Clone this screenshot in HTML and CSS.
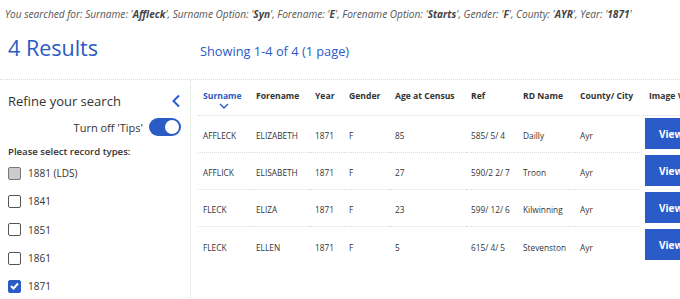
FILE: index.html
```html
<!DOCTYPE html>
<html>
<head>
<meta charset="utf-8">
<link rel="stylesheet" href="styles.css">
</head>
<body>
<p class="searched">You searched for: Surname: '<b>Affleck</b>', Surname Option: '<b>Syn</b>', Forename: '<b>E</b>', Forename Option: '<b>Starts</b>', Gender: '<b>F</b>', County: '<b>AYR</b>', Year: '<b>1871</b>'</p>
<div class="headline">
  <h1 class="count">4 Results</h1>
  <div class="showing">Showing 1-4 of 4 (1 page)</div>
</div>
<div class="layout">
  <aside class="side">
    <div class="refine">
      <span>Refine your search</span>
      <svg class="back" width="10" height="14" viewBox="0 0 10 14"><path d="M8 1.5 L2.5 7 L8 12.5" fill="none" stroke="#2b5bd0" stroke-width="2"/></svg>
    </div>
    <div class="tips">
      <span>Turn off 'Tips'</span>
      <span class="toggle"><span class="knob"></span></span>
    </div>
    <div class="select">Please select record types:</div>
    <ul class="types">
      <li><span class="cb grey"></span>1881 (LDS)</li>
      <li><span class="cb"></span>1841</li>
      <li><span class="cb"></span>1851</li>
      <li><span class="cb"></span>1861</li>
      <li><span class="cb on"><svg width="9" height="8" viewBox="0 0 9 8"><path d="M1 4 L3.5 6.5 L8 1.5" fill="none" stroke="#fff" stroke-width="2"/></svg></span>1871</li>
    </ul>
  </aside>
  <main class="results">
    <div class="thead">
      <div class="th sorted">Surname<svg class="sortarrow" width="10" height="6" viewBox="0 0 10 6"><path d="M1 1 L5 5 L9 1" fill="none" stroke="#2b5bd0" stroke-width="1.4"/></svg></div>
      <div class="th">Forename</div>
      <div class="th">Year</div>
      <div class="th">Gender</div>
      <div class="th">Age at Census</div>
      <div class="th">Ref</div>
      <div class="th">RD Name</div>
      <div class="th">County/ City</div>
      <div class="th img">Image Viewer</div>
    </div>
    <div class="row"><div class="td">AFFLECK</div><div class="td">ELIZABETH</div><div class="td">1871</div><div class="td">F</div><div class="td">85</div><div class="td">585/ 5/ 4</div><div class="td">Dailly</div><div class="td">Ayr</div><div class="btncell"><span class="view">View image</span></div></div>
    <div class="row"><div class="td">AFFLICK</div><div class="td">ELISABETH</div><div class="td">1871</div><div class="td">F</div><div class="td">27</div><div class="td">590/2 2/ 7</div><div class="td">Troon</div><div class="td">Ayr</div><div class="btncell"><span class="view">View image</span></div></div>
    <div class="row"><div class="td">FLECK</div><div class="td">ELIZA</div><div class="td">1871</div><div class="td">F</div><div class="td">23</div><div class="td">599/ 12/ 6</div><div class="td">Kilwinning</div><div class="td">Ayr</div><div class="btncell"><span class="view">View image</span></div></div>
    <div class="row last"><div class="td">FLECK</div><div class="td">ELLEN</div><div class="td">1871</div><div class="td">F</div><div class="td">5</div><div class="td">615/ 4/ 5</div><div class="td">Stevenston</div><div class="td">Ayr</div><div class="btncell"><span class="view">View image</span></div></div>
  </main>
</div>
</body>
</html>
```

FILE: styles.css
```css
html, body {
  margin: 0;
  padding: 0;
  background: #fff;
  overflow: hidden;
}
body {
  font-family: "Open Sans", "Liberation Sans", sans-serif;
  color: #333;
  width: 680px;
  height: 299px;
}
.searched {
  margin: 0;
  padding: 7px 0 0 5px;
  height: 17px;
  font-size: 10.1px;
  font-style: italic;
  color: #555;
  white-space: nowrap;
}
.searched b {
  font-weight: 700;
  color: #444;
}
.headline {
  display: flex;
  align-items: baseline;
  padding: 9px 0 0 8px;
  border-bottom: 1px dotted #ddd;
  box-sizing: border-box;
  height: 56px;
}
.count {
  margin: 0;
  font-size: 21.5px;
  font-weight: 400;
  color: #2b5bc4;
  width: 192px;
}
.showing {
  font-size: 12.8px;
  color: #2b5bc4;
}
.layout {
  display: flex;
  height: 220px;
}
.side {
  width: 191px;
  border-right: 1px dotted #cfe3cf;
  box-sizing: border-box;
  padding: 12px 9px 0 8px;
}
.refine {
  display: flex;
  justify-content: space-between;
  align-items: center;
  font-size: 13px;
  color: #333;
  height: 18px;
}
.tips {
  display: flex;
  justify-content: flex-end;
  align-items: center;
  gap: 6px;
  font-size: 11px;
  margin-top: 8px;
  height: 18px;
}
.toggle {
  width: 32px;
  height: 18px;
  border-radius: 9px;
  background: #2b5bc4;
  display: inline-flex;
  align-items: center;
  justify-content: flex-end;
  padding: 0 2px;
  box-sizing: border-box;
}
.knob {
  width: 14px;
  height: 14px;
  border-radius: 50%;
  background: #fff;
}
.select {
  font-size: 9.6px;
  font-weight: 600;
  margin-top: 9px;
}
.types {
  list-style: none;
  margin: 1px 0 0 0;
  padding: 0;
}
.types li {
  display: flex;
  align-items: center;
  height: 28.3px;
  font-size: 10px;
}
.cb {
  width: 11px;
  height: 11px;
  border: 1px solid #555;
  border-radius: 2px;
  margin-right: 7px;
  display: inline-flex;
  align-items: center;
  justify-content: center;
  box-sizing: content-box;
}
.cb.grey {
  background: #ccc;
  border-color: #777;
}
.cb.on {
  background: #2b5bc4;
  border-color: #2b5bc4;
}
.results {
  flex: 1;
  padding-left: 7px;
  overflow: hidden;
}
.thead, .row {
  display: grid;
  grid-template-columns: 53px 59px 34px 46px 76px 52px 57px 65px 140px;
}
.thead {
  height: 36px;
  border-bottom: 1px dotted #ddd;
  box-sizing: border-box;
}
.th {
  font-size: 8.6px;
  font-weight: 700;
  color: #333;
  padding: 10px 0 0 5px;
  white-space: nowrap;
  overflow: hidden;
}
.th.sorted {
  color: #2b5bc4;
  position: relative;
}
.th.img {
  padding-left: 9px;
}
.sortarrow {
  position: absolute;
  left: 21px;
  top: 23px;
}
.row {
  height: 37px;
}
.td {
  display: flex;
  align-items: center;
  padding: 3px 0 0 5px;
  font-size: 8.3px;
  color: #333;
  white-space: nowrap;
  border-bottom: 1px dotted #ddd;
}
.row.last .td {
  border-bottom: none;
}
.btncell {
  padding: 2px 0 0 5px;
}
.view {
  display: flex;
  align-items: center;
  height: 31px;
  background: #2b5bc8;
  color: #fff;
  font-weight: 700;
  font-size: 10px;
  padding-left: 14px;
}
```
